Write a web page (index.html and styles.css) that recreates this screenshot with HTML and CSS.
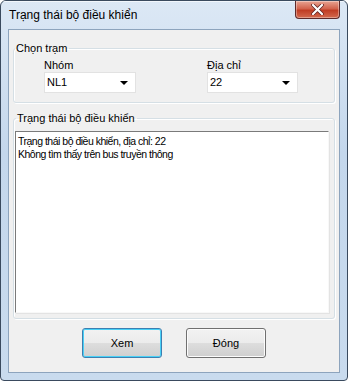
FILE: index.html
```html
<!DOCTYPE html>
<html lang="vi">
<head>
    <meta charset="UTF-8">
    <title>Trạng thái bộ điều khiển</title>
    <link rel="stylesheet" href="styles.css">
</head>
<body>
    <div class="window">
        <div class="titlebar">
            <span class="title">Trạng thái bộ điều khiển</span>
            <button class="close">
                <svg width="13" height="11" viewBox="0 0 13 11">
                    <path d="M2 1 L11 10 M11 1 L2 10" stroke="#5a2020" stroke-width="3.6" stroke-linecap="round"/>
                    <path d="M2 1 L11 10 M11 1 L2 10" stroke="#ffffff" stroke-width="2.2" stroke-linecap="round"/>
                </svg>
            </button>
        </div>

        <div class="client">
            <fieldset class="group station">
                <legend>Chọn trạm</legend>
                <div class="fields">
                    <div class="field group-field">
                        <label>Nhóm</label>
                        <div class="combo">NL1<span class="arrow"></span></div>
                    </div>
                    <div class="field addr-field">
                        <label>Địa chỉ</label>
                        <div class="combo">22<span class="arrow"></span></div>
                    </div>
                </div>
            </fieldset>

            <fieldset class="group status">
                <legend>Trạng thái bộ điều khiển</legend>
                <div class="textbox">Trạng thái bộ điều khiển, địa chỉ: 22<br>Không tìm thấy trên bus truyền thông</div>
            </fieldset>

            <div class="buttons">
                <button class="btn default">Xem</button>
                <button class="btn">Đóng</button>
            </div>
        </div>
    </div>
</body>
</html>
```

FILE: styles.css
```css
body {
    margin: 0;
    background: #ffffff;
    font-family: "Liberation Sans", Arial, sans-serif;
    font-size: 11px;
    color: #000;
}
.window {
    width: 348px;
    height: 381px;
    box-sizing: border-box;
    border: 1px solid #3a4a5e;
    border-radius: 6px 6px 4px 4px;
    background: linear-gradient(#dce8f5, #c4d7ec 40%, #c9dbee);
    display: flex;
    flex-direction: column;
    overflow: hidden;
}
.titlebar {
    height: 28px;
    display: flex;
    align-items: flex-start;
    justify-content: space-between;
    box-shadow: inset 0 1px 0 #f2f7fc;
}
.title {
    font-size: 12px;
    margin: 7px 0 0 8px;
    color: #000;
}
.close {
    width: 45px;
    height: 18px;
    margin: 0 7px 0 0;
    padding: 0;
    border: 1px solid #5e2a2a;
    border-top: none;
    border-radius: 0 0 4px 4px;
    background: linear-gradient(#e8a493, #d2634d 45%, #c03d24 55%, #d36a4f);
    box-shadow: inset 0 0 0 1px rgba(255,255,255,0.35);
    display: flex;
    align-items: center;
    justify-content: center;
}
.client {
    flex: 1;
    margin: 0 7px 7px 7px;
    border: 1px solid #8da4bd;
    background: #f0f0f0;
    display: flex;
    flex-direction: column;
    padding: 0 4px;
}
.group {
    margin: 0;
    padding: 0;
    border: 1px solid #d5dfe5;
    border-radius: 3px;
    box-shadow: 1px 1px 0 #ffffff, inset 1px 1px 0 #ffffff;
}
.group legend {
    padding: 0 2px 0 1px;
    margin-left: 1px;
    line-height: 14px;
    font-size: 11px;
}
.station {
    margin-top: 11px;
    padding: 4px 0 9px 0;
}
.fields {
    display: flex;
}
.field label {
    display: block;
    height: 13px;
    font-size: 11px;
    line-height: 13px;
}
.group-field {
    margin-left: 30px;
    width: 92px;
}
.addr-field {
    margin-left: 71px;
    width: 91px;
}
.combo {
    position: relative;
    height: 21px;
    box-sizing: border-box;
    background: #ffffff;
    border: 1px solid #e2e2e2;
    font-size: 11px;
    line-height: 19px;
    padding-left: 2px;
}
.arrow {
    position: absolute;
    right: 7px;
    top: 8px;
    width: 0;
    height: 0;
    border-left: 4px solid transparent;
    border-right: 4px solid transparent;
    border-top: 4px solid #000;
}
.status {
    margin-top: 8px;
    padding: 6px 0 5px 1px;
}
.textbox {
    height: 182px;
    box-sizing: border-box;
    margin-right: 5px;
    background: #ffffff;
    border-top: 1px solid #7a7a7a;
    border-left: 1px solid #7a7a7a;
    border-right: 1px solid #f8f8f8;
    border-bottom: 1px solid #f8f8f8;
    box-shadow: 1px 1px 0 #e3e3e3;
    padding: 3px 2px;
    font-size: 10.5px;
    line-height: 13px;
    letter-spacing: -0.5px;
}
.buttons {
    display: flex;
    justify-content: center;
    gap: 24px;
    margin-top: 9px;
}
.btn {
    width: 80px;
    height: 30px;
    border: 1px solid #707070;
    border-radius: 3px;
    background: linear-gradient(#f2f2f2, #ebebeb 50%, #dddddd 51%, #cfcfcf);
    box-shadow: inset 0 0 0 1px #fcfcfc;
    font-family: "Liberation Sans", Arial, sans-serif;
    font-size: 11px;
    font-weight: normal;
    color: #000;
    padding: 0;
}
.btn.default {
    border-color: #3c7fb1;
    box-shadow: inset 0 0 0 1px #48d0f6;
}
```
